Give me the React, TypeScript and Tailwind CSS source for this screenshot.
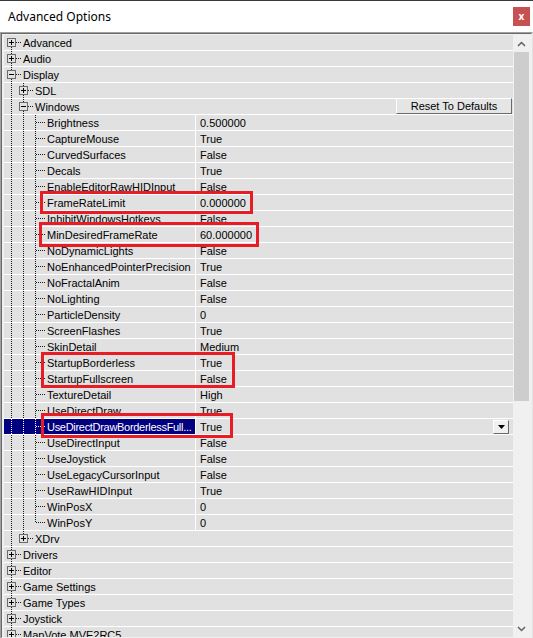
import React from 'react';
import clsx from 'clsx';

type Item = {
  label: string;
  value?: string;
  open?: boolean;
  children?: Item[];
  reset?: boolean;
  selected?: boolean;
  dropdown?: boolean;
};

type Row = {
  item: Item;
  level: number;
  guides: boolean[];
  first: boolean;
  last: boolean;
};

const windowsSettings: Item[] = [
  { label: 'Brightness', value: '0.500000' },
  { label: 'CaptureMouse', value: 'True' },
  { label: 'CurvedSurfaces', value: 'False' },
  { label: 'Decals', value: 'True' },
  { label: 'EnableEditorRawHIDInput', value: 'False' },
  { label: 'FrameRateLimit', value: '0.000000' },
  { label: 'InhibitWindowsHotkeys', value: 'False' },
  { label: 'MinDesiredFrameRate', value: '60.000000' },
  { label: 'NoDynamicLights', value: 'False' },
  { label: 'NoEnhancedPointerPrecision', value: 'True' },
  { label: 'NoFractalAnim', value: 'False' },
  { label: 'NoLighting', value: 'False' },
  { label: 'ParticleDensity', value: '0' },
  { label: 'ScreenFlashes', value: 'True' },
  { label: 'SkinDetail', value: 'Medium' },
  { label: 'StartupBorderless', value: 'True' },
  { label: 'StartupFullscreen', value: 'False' },
  { label: 'TextureDetail', value: 'High' },
  { label: 'UseDirectDraw', value: 'True' },
  { label: 'UseDirectDrawBorderlessFull...', value: 'True', selected: true, dropdown: true },
  { label: 'UseDirectInput', value: 'False' },
  { label: 'UseJoystick', value: 'False' },
  { label: 'UseLegacyCursorInput', value: 'False' },
  { label: 'UseRawHIDInput', value: 'True' },
  { label: 'WinPosX', value: '0' },
  { label: 'WinPosY', value: '0' },
];

const tree: Item[] = [
  { label: 'Advanced' },
  { label: 'Audio' },
  {
    label: 'Display',
    open: true,
    children: [
      { label: 'SDL' },
      { label: 'Windows', open: true, reset: true, children: windowsSettings },
      { label: 'XDrv' },
    ],
  },
  { label: 'Drivers' },
  { label: 'Editor' },
  { label: 'Game Settings' },
  { label: 'Game Types' },
  { label: 'Joystick' },
  { label: 'MapVote MVE2RC5' },
];

// root list keeps going past the bottom edge, so its line never ends
function flatten(items: Item[], level: number, guides: boolean[], openEnd: boolean): Row[] {
  const rows: Row[] = [];
  items.forEach((item, i) => {
    const last = i === items.length - 1 && !openEnd;
    rows.push({ item, level, guides, first: level === 0 && i === 0, last });
    if (item.open && item.children) {
      rows.push(...flatten(item.children, level + 1, [...guides, !last], false));
    }
  });
  return rows;
}

const rows = flatten(tree, 0, [], true);

function Connector({
  top = false,
  bottom = false,
  horiz = false,
  box,
  color,
  fill,
}: {
  top?: boolean;
  bottom?: boolean;
  horiz?: boolean;
  box?: 'plus' | 'minus';
  color: string;
  fill: string;
}) {
  return (
    <svg width="12" height="15" className="shrink-0" shapeRendering="crispEdges">
      {top && bottom && <line x1="6.5" y1="0" x2="6.5" y2="15" stroke={color} strokeDasharray="1 1" />}
      {top && !bottom && <line x1="6.5" y1="0" x2="6.5" y2="8" stroke={color} strokeDasharray="1 1" />}
      {!top && bottom && <line x1="6.5" y1="8" x2="6.5" y2="15" stroke={color} strokeDasharray="1 1" />}
      {horiz && <line x1="7" y1="7.5" x2="12" y2="7.5" stroke={color} strokeDasharray="1 1" />}
      {box && (
        <>
          <rect x="2.5" y="3.5" width="8" height="8" fill={fill} stroke="#6b6b6b" />
          <line x1="4" y1="7.5" x2="9" y2="7.5" stroke="#000" />
          {box === 'plus' && <line x1="6.5" y1="5" x2="6.5" y2="10" stroke="#000" />}
        </>
      )}
    </svg>
  );
}

function TreeRow({ row }: { row: Row }) {
  const { item, level, guides, first, last } = row;
  const isLeaf = item.value !== undefined;
  const selected = !!item.selected;
  const dots = selected ? '#ffffff' : '#1a1a1a';
  const bg = selected ? '#000080' : '#e1e1e1';

  const name = (
    <div className="flex items-center min-w-0 flex-1 overflow-hidden pl-[1px]">
      {guides.map((on, i) => (
        <Connector key={i} top={on} bottom={on} color={dots} fill={bg} />
      ))}
      <Connector
        top={!first}
        bottom={!last}
        horiz
        box={isLeaf ? undefined : item.open ? 'minus' : 'plus'}
        color={dots}
        fill={bg}
      />
      <svg width="5" height="15" className="shrink-0" shapeRendering="crispEdges">
        <line x1="1" y1="7.5" x2="5" y2="7.5" stroke={dots} strokeDasharray="1 1" />
      </svg>
      <span className={clsx('pl-[1px] whitespace-nowrap translate-y-px', selected && 'tracking-[-0.3px]')}>
        {item.label}
      </span>
    </div>
  );

  return (
    <div className="flex h-[16px] shrink-0 border-b border-white bg-[#e1e1e1] text-[11px] leading-[15px] text-black">
      {isLeaf ? (
        <>
          <div
            className={clsx(
              'flex w-[192px] shrink-0 border-r border-white',
              selected && 'bg-[#000080] text-white',
            )}
          >
            {name}
          </div>
          <div className="flex flex-1 items-center pl-[4px]">
            <span className="translate-y-px">{item.value}</span>
            {item.dropdown && (
              <div className="ml-auto mr-[4px] flex h-[14px] w-[16px] items-center justify-center border border-t-white border-l-white border-r-[#696969] border-b-[#696969] bg-[#f0f0f0]">
                <svg width="7" height="4" viewBox="0 0 7 4">
                  <path d="M0 0H7L3.5 4Z" fill="#000" />
                </svg>
              </div>
            )}
          </div>
        </>
      ) : (
        <>
          {name}
          {item.reset && (
            <button className="mr-[1px] -mt-[1px] h-[16px] w-[116px] shrink-0 border border-t-white border-l-white border-r-[#696969] border-b-[#696969] bg-[#e5e5e5] text-[11px] leading-[13px] text-black">
              Reset To Defaults
            </button>
          )}
        </>
      )}
    </div>
  );
}

function ScrollArrow({ down = false }: { down?: boolean }) {
  return (
    <div className="flex h-[17px] shrink-0 items-center justify-center">
      <svg width="9" height="6" viewBox="0 0 9 6" className={clsx(down && 'rotate-180')}>
        <path d="M1 5L4.5 1.5L8 5" fill="none" stroke="#606060" strokeWidth="1.5" />
      </svg>
    </div>
  );
}

// red highlight frames drawn on top of the settings list
const marks = [
  'left-[40px] top-[191px] w-[213px] h-[23px]',
  'left-[39px] top-[222px] w-[220px] h-[25px]',
  'left-[41px] top-[352px] w-[194px] h-[36px]',
  'left-[41px] top-[413px] w-[192px] h-[25px]',
];

export default function App() {
  return (
    <div className="relative flex h-[638px] w-[533px] flex-col overflow-hidden bg-white font-['Liberation_Sans',Arial,sans-serif]">
      <div className="flex h-[32px] shrink-0 items-center justify-between border-t border-[#3a3a3a] pl-[8px] pr-[3px]">
        <span className="font-['Noto_Sans',sans-serif] text-[12px] text-black">Advanced Options</span>
        <div className="mb-[1px] flex h-[19px] w-[17px] items-center justify-center bg-[#c75050] font-['Noto_Sans',sans-serif] text-[10px] font-bold leading-none text-white">
          x
        </div>
      </div>
      <div className="flex flex-1 min-h-0 border-t border-l border-r border-[#a0a0a0] border-r-[#e3e3e3]">
        <div className="flex flex-1 min-h-0 border-t border-l border-b border-r border-[#696969] border-r-[#f0f0f0] border-b-[#f0f0f0] bg-[#f0f0f0] pt-[1px] pl-[2px] pr-[1px]">
          <div className="flex flex-1 min-w-0 flex-col overflow-hidden">
            {rows.map((row, i) => (
              <TreeRow key={i} row={row} />
            ))}
          </div>
          <div className="flex w-[17px] shrink-0 flex-col bg-[#f0f0f0]">
            <ScrollArrow />
            <div className="mx-px h-[349px] shrink-0 bg-[#cdcdcd]" />
            <div className="flex-1" />
            <ScrollArrow down />
          </div>
        </div>
      </div>
      {marks.map((m) => (
        <div key={m} className={clsx('pointer-events-none absolute border-[3px] border-[#e81c24]', m)} />
      ))}
    </div>
  );
}
